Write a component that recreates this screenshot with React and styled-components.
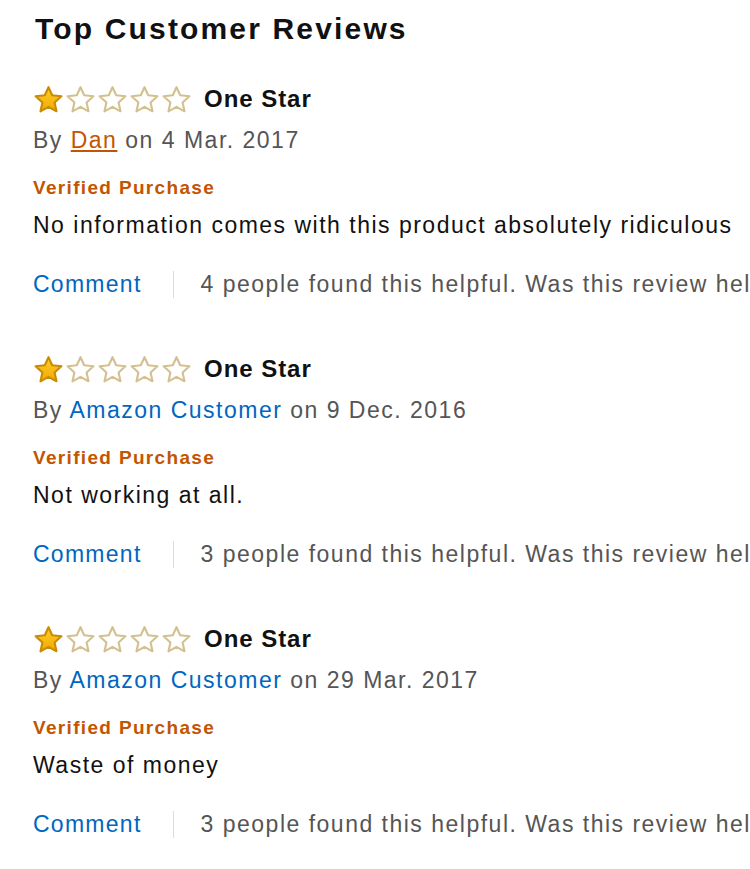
import styled, { createGlobalStyle } from "styled-components";

const GlobalStyle = createGlobalStyle`
  body {
    margin: 0;
    background: #ffffff;
    font-family: "Liberation Sans", Arial, sans-serif;
    overflow: hidden;
  }
`;

const reviews = [
  {
    title: "One Star",
    author: "Dan",
    visited: true,
    date: "4 Mar. 2017",
    text: "No information comes with this product absolutely ridiculous",
    helpful: 4,
  },
  {
    title: "One Star",
    author: "Amazon Customer",
    date: "9 Dec. 2016",
    text: "Not working at all.",
    helpful: 3,
  },
  {
    title: "One Star",
    author: "Amazon Customer",
    date: "29 Mar. 2017",
    text: "Waste of money",
    helpful: 3,
  },
];

function Star({ filled }) {
  return (
    <svg width="31" height="28" viewBox="0 0 31 28">
      <defs>
        <linearGradient id="gold" x1="0" y1="0" x2="0" y2="1">
          <stop offset="0" stopColor="#ffcd2e" />
          <stop offset="1" stopColor="#f2a900" />
        </linearGradient>
      </defs>
      <path
        d="M15.5 2.2 L19.2 10.3 L28.4 11.3 L21.6 17.5 L23.5 26.3 L15.5 21.8 L7.5 26.3 L9.4 17.5 L2.6 11.3 L11.8 10.3 Z"
        fill={filled ? "url(#gold)" : "#ffffff"}
        stroke={filled ? "#c98b00" : "#d3c08e"}
        strokeWidth="2.1"
        strokeLinejoin="round"
      />
    </svg>
  );
}

function Rating({ value }) {
  return (
    <Stars>
      {[1, 2, 3, 4, 5].map((n) => (
        <Star key={n} filled={n <= value} />
      ))}
    </Stars>
  );
}

function Review({ review }) {
  return (
    <ReviewBox>
      <TitleRow>
        <Rating value={1} />
        <ReviewTitle>{review.title}</ReviewTitle>
      </TitleRow>
      <ByLine>
        By <Author visited={review.visited}>{review.author}</Author> on{" "}
        {review.date}
      </ByLine>
      <Verified>Verified Purchase</Verified>
      <Body>{review.text}</Body>
      <Actions>
        <CommentLink>Comment</CommentLink>
        <Divider />
        <Helpful>
          {review.helpful} people found this helpful. Was this review helpful
          to you?
        </Helpful>
      </Actions>
    </ReviewBox>
  );
}

export default function App() {
  return (
    <>
      <GlobalStyle />
      <Page>
        <Heading>Top Customer Reviews</Heading>
        <List>
          {reviews.map((r, i) => (
            <Review key={i} review={r} />
          ))}
        </List>
      </Page>
    </>
  );
}

const Page = styled.div`
  padding: 11px 0 0 33px;
  white-space: nowrap;
  overflow: hidden;
  width: 717px;
`;

const Heading = styled.h2`
  margin: 0;
  font-size: 30px;
  line-height: 36px;
  font-weight: 700;
  letter-spacing: 0.072em;
  color: #111111;
  padding-left: 2px;
`;

const List = styled.div`
  display: flex;
  flex-direction: column;
  gap: 55px;
  margin-top: 38px;
`;

const ReviewBox = styled.div`
  display: flex;
  flex-direction: column;
`;

const TitleRow = styled.div`
  display: flex;
  align-items: center;
  gap: 12px;
  height: 28px;
`;

const Stars = styled.div`
  display: flex;
  gap: 1px;
`;

const ReviewTitle = styled.span`
  font-size: 24px;
  font-weight: 700;
  letter-spacing: 0.04em;
  color: #111111;
`;

const ByLine = styled.div`
  margin-top: 11px;
  font-size: 23px;
  line-height: 32px;
  letter-spacing: 0.065em;
  color: #555555;
`;

const Author = styled.a`
  color: ${(p) => (p.visited ? "#c45500" : "#0066c0")};
  text-decoration: ${(p) => (p.visited ? "underline" : "none")};
`;

const Verified = styled.div`
  margin-top: 20px;
  font-size: 19px;
  line-height: 24px;
  font-weight: 700;
  letter-spacing: 0.07em;
  color: #c45500;
`;

const Body = styled.div`
  margin-top: 10px;
  font-size: 23px;
  line-height: 30px;
  letter-spacing: 0.065em;
  color: #111111;
`;

const Actions = styled.div`
  display: flex;
  align-items: center;
  margin-top: 28px;
  height: 32px;
  font-size: 23px;
  letter-spacing: 0.055em;
`;

const CommentLink = styled.a`
  flex-shrink: 0;
  color: #0066c0;
`;

const Divider = styled.span`
  flex-shrink: 0;
  width: 1px;
  height: 27px;
  background: #dcdcdc;
  margin: 0 27px 0 31px;
`;

const Helpful = styled.span`
  flex-shrink: 0;
  color: #555555;
  letter-spacing: 0.065em;
`;
